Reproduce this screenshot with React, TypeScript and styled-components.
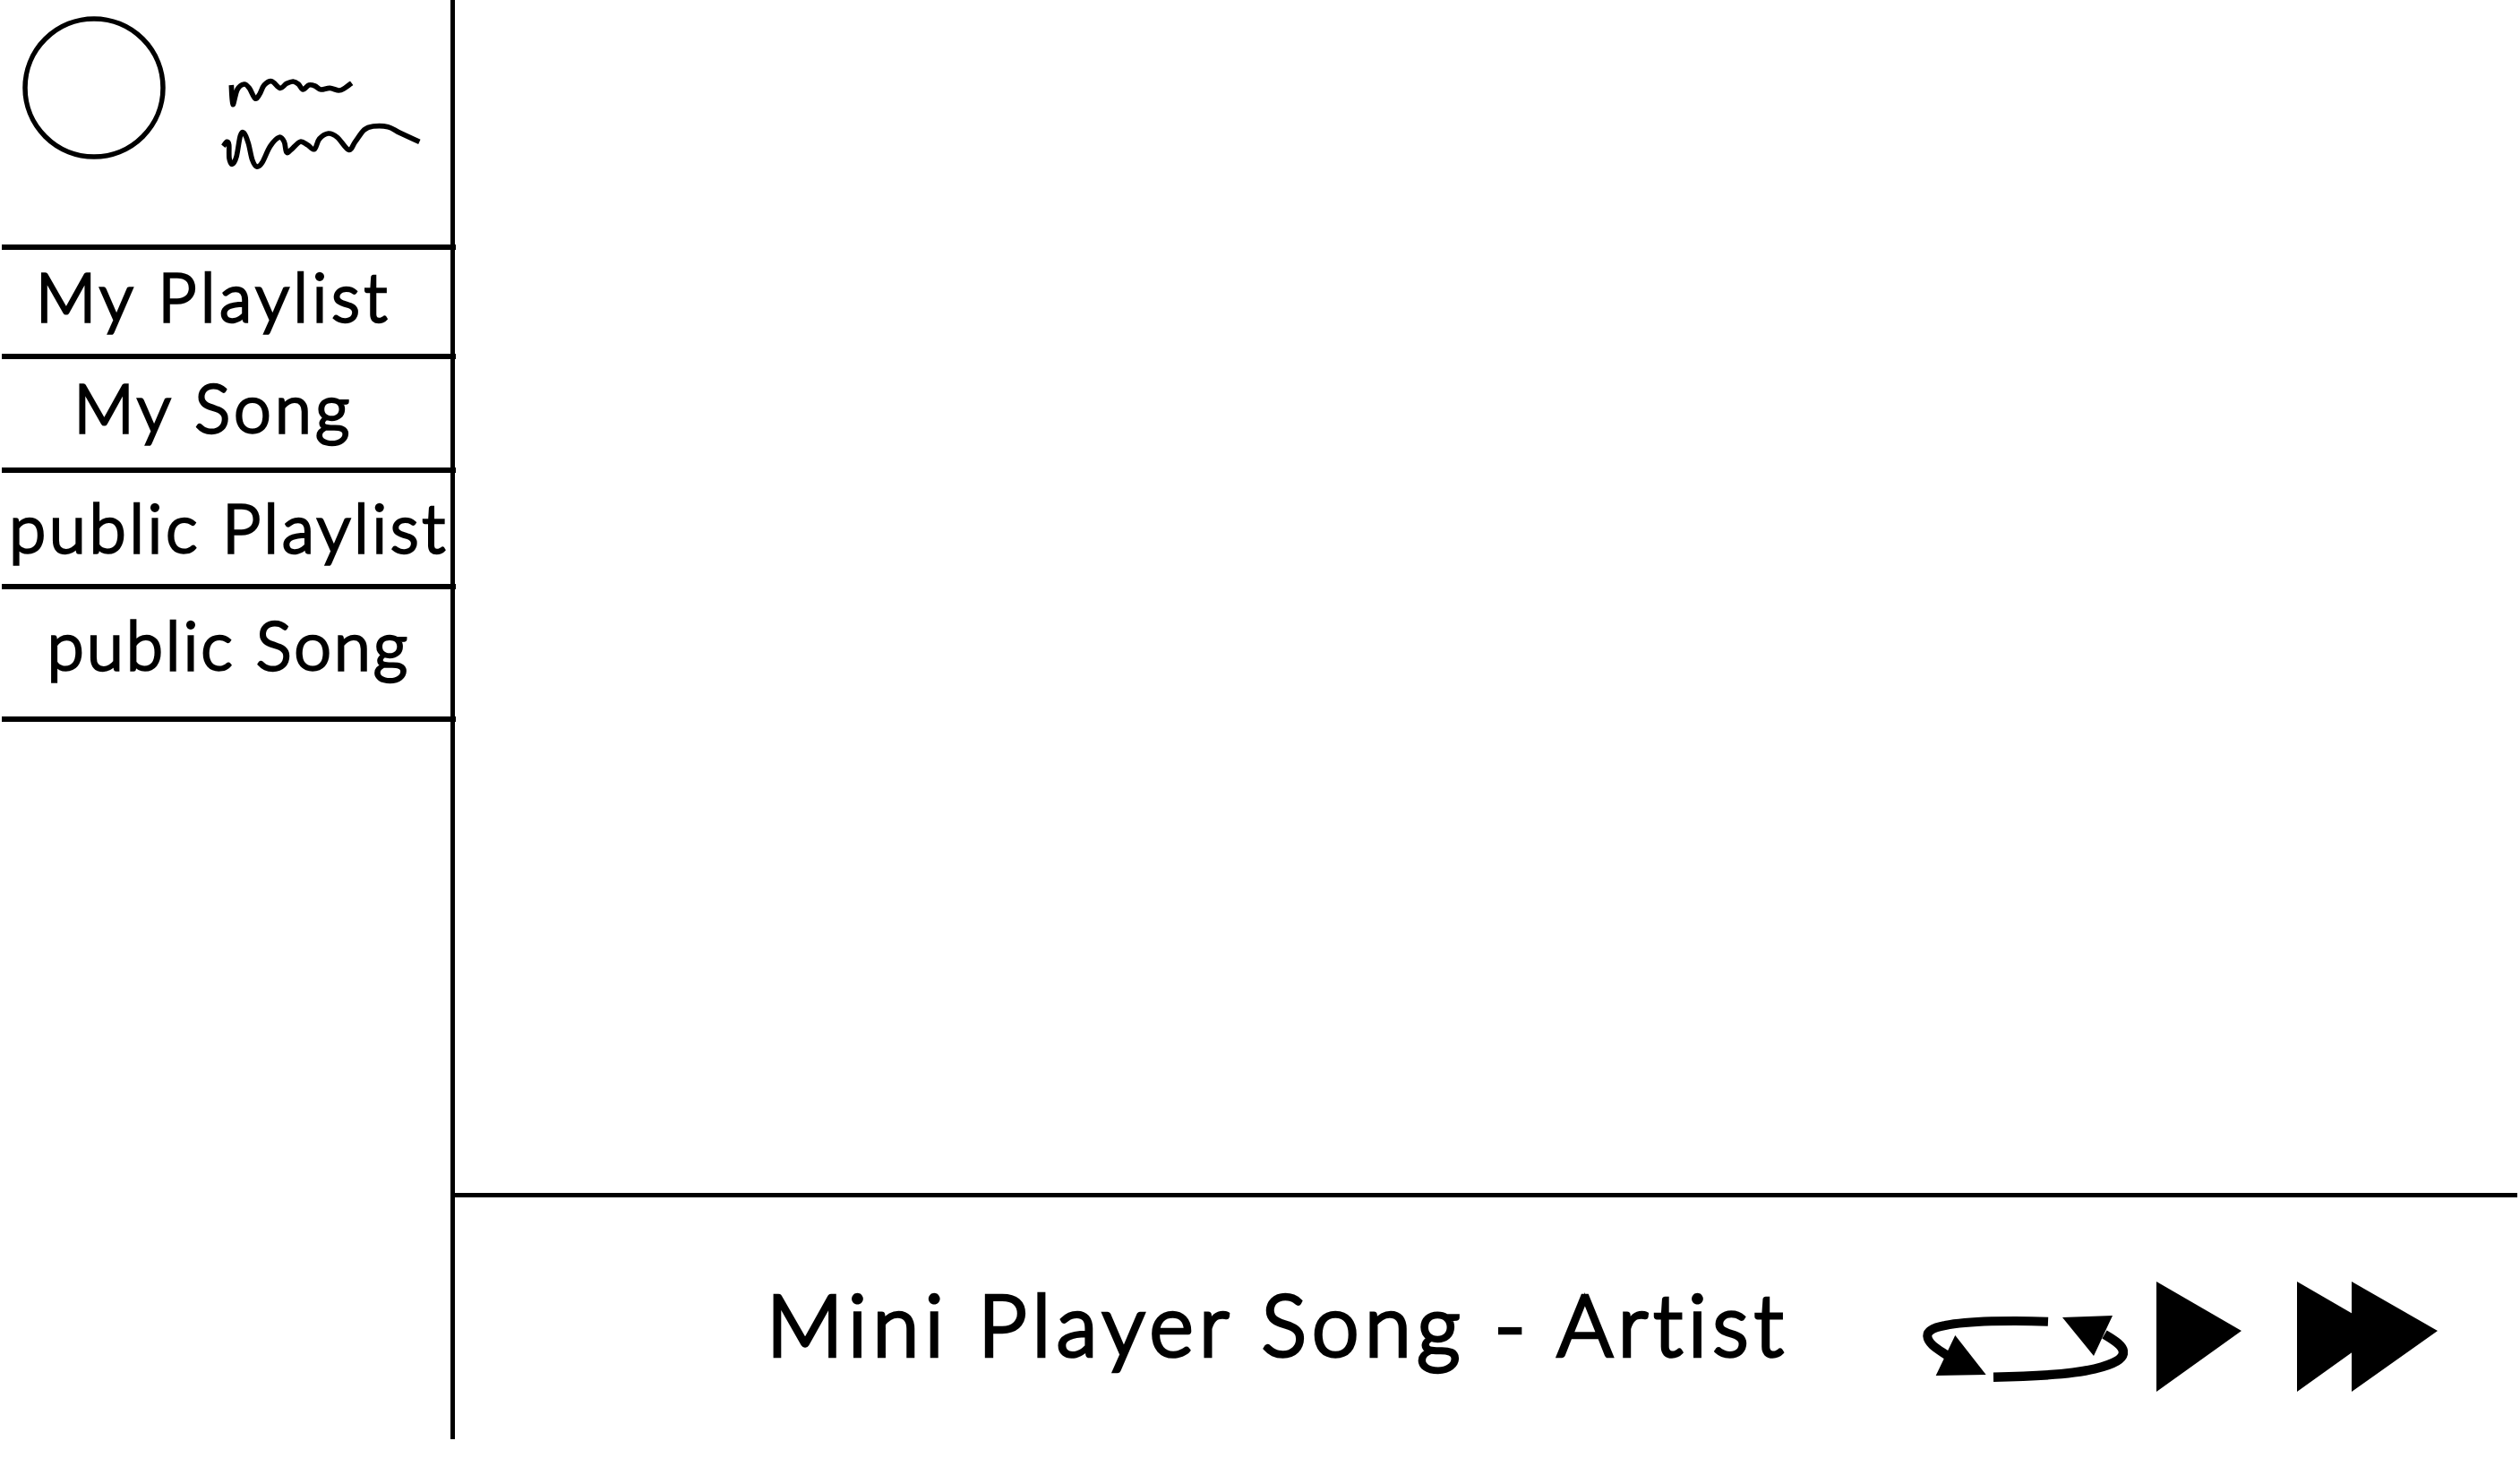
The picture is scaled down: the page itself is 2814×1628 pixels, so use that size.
import styled, { createGlobalStyle } from "styled-components";

const GlobalStyle = createGlobalStyle`
  html, body {
    margin: 0;
    padding: 0;
    background: #fff;
  }
`;

const navItems = [
  { label: "My Playlist", height: 122, shift: 34, lift: 13, tracking: 5 },
  { label: "My Song", height: 127, shift: 34, lift: 14, tracking: 4.5 },
  { label: "public Playlist", height: 130, shift: 0, lift: 4, tracking: 4 },
  { label: "public Song", height: 154, shift: 0, lift: 19, tracking: 3.3 },
];

// catmull-rom through the sampled points, the scribbles are hand drawn
const smooth = (pts: number[][]) => {
  let d = `M${pts[0][0]} ${pts[0][1]}`;
  for (let i = 0; i < pts.length - 1; i++) {
    const p0 = pts[i - 1] || pts[i];
    const p1 = pts[i];
    const p2 = pts[i + 1];
    const p3 = pts[i + 2] || p2;
    const c1x = p1[0] + (p2[0] - p0[0]) / 6;
    const c1y = p1[1] + (p2[1] - p0[1]) / 6;
    const c2x = p2[0] - (p3[0] - p1[0]) / 6;
    const c2y = p2[1] - (p3[1] - p1[1]) / 6;
    d += `C${c1x} ${c1y} ${c2x} ${c2y} ${p2[0]} ${p2[1]}`;
  }
  return d;
};

const nameScribble = smooth([
  [55, 45], [60, 110], [75, 60], [98, 42], [115, 55], [135, 90], [150, 75], [165, 45], [190, 32],
  [218, 55], [240, 40], [262, 33], [280, 42], [295, 60], [315, 45], [335, 48], [355, 60],
  [385, 55], [415, 63], [435, 55], [458, 38],
]);

const emailScribble = smooth([
  [28, 250], [40, 235], [47, 245], [48, 290], [58, 310], [72, 285], [85, 215], [97, 205],
  [112, 240], [125, 295], [140, 318], [158, 305], [185, 250], [215, 220], [232, 235], [240, 270],
  [255, 262], [285, 235], [310, 245], [333, 260], [350, 225], [380, 207], [410, 220], [448, 262],
  [470, 235], [500, 195], [530, 183], [580, 185], [620, 205], [685, 235],
]);

export default function App() {
  return (
    <Page>
      <GlobalStyle />
      <Sidebar>
        <Profile>
          <Avatar viewBox="0 0 160 160">
            <circle cx="80" cy="80" r="77" fill="none" stroke="#000" strokeWidth="5.5" />
          </Avatar>
          <Scribble viewBox="0 0 720 330">
            <path d={nameScribble} fill="none" stroke="#000" strokeWidth="17" strokeLinejoin="round" />
            <path d={emailScribble} fill="none" stroke="#000" strokeWidth="17" strokeLinejoin="round" />
          </Scribble>
        </Profile>
        {navItems.map((item) => (
          <NavRow
            key={item.label}
            $height={item.height}
            $shift={item.shift}
            $lift={item.lift}
            $tracking={item.tracking}
          >
            {item.label}
          </NavRow>
        ))}
      </Sidebar>
      <Main>
        <Content />
        <PlayerBar>
          <SongTitle>Mini Player Song - Artist</SongTitle>
          <Controls>
            <RepeatIcon viewBox="0 0 229 74">
              <path
                d="M140 6.700C100 5 50 6 25 11C8 14 5 19 5.300 23C6 32 18 38 28 45"
                fill="none"
                stroke="#000"
                strokeWidth="10"
              />
              <polygon points="36.300,22 70.700,66 14.700,67" />
              <path
                d="M79 68.700C120 68 165 66 192 59.500C215 54 224 48 224 41C224 34 215 28 203 21"
                fill="none"
                stroke="#000"
                strokeWidth="10.500"
              />
              <polygon points="156,2 212,0 191,45" />
            </RepeatIcon>
            <PlayIcon viewBox="0 0 95 123">
              <polygon points="0,0 95,55 0,123" />
            </PlayIcon>
            <ForwardIcon viewBox="0 0 157 123">
              <polygon points="0,0 95,55 0,123" />
              <polygon points="61,0 157,55 61,123" />
            </ForwardIcon>
          </Controls>
        </PlayerBar>
      </Main>
    </Page>
  );
}

const Page = styled.div`
  display: flex;
  box-sizing: border-box;
  width: 2811px;
  height: 1607px;
  padding-left: 2px;
  font-family: "Lato", "Noto Sans", sans-serif;
  color: #000;
`;

const Sidebar = styled.aside`
  display: flex;
  flex-direction: column;
  flex: 0 0 501px;
`;

const Profile = styled.div`
  display: flex;
  align-items: flex-start;
  height: 273px;
  padding: 18px 0 0 23px;
  box-sizing: border-box;
`;

const Avatar = styled.svg`
  width: 160px;
  height: 160px;
  flex: none;
`;

const Scribble = styled.svg`
  width: 240px;
  height: 110px;
  margin: 62px 0 0 55px;
  flex: none;
`;

const NavRow = styled.div<{ $height: number; $shift: number; $lift: number; $tracking: number }>`
  display: flex;
  align-items: center;
  justify-content: center;
  box-sizing: border-box;
  height: ${(p) => p.$height}px;
  margin-right: -6px;
  padding: 0 ${(p) => p.$shift}px ${(p) => p.$lift}px 0;
  border-top: 6px solid #000;
  font-size: 74px;
  font-weight: 300;
  letter-spacing: ${(p) => p.$tracking}px;
  white-space: nowrap;
  -webkit-text-stroke: 3.5px #000;

  &:last-child {
    border-bottom: 6px solid #000;
  }
`;

const Main = styled.main`
  display: flex;
  flex-direction: column;
  flex: 1;
  border-left: 5px solid #000;
`;

const Content = styled.div`
  flex: 1;
`;

const PlayerBar = styled.div`
  display: flex;
  align-items: flex-start;
  flex: 0 0 270px;
  padding: 0 89px 0 348px;
  border-top: 5px solid #000;
`;

const SongTitle = styled.div`
  margin-top: 84px;
  font-size: 94px;
  font-weight: 300;
  letter-spacing: 6.5px;
  white-space: nowrap;
  -webkit-text-stroke: 4.5px #000;
`;

const Controls = styled.div`
  display: flex;
  align-items: flex-start;
  margin-left: auto;
  padding-top: 94px;
`;

const RepeatIcon = styled.svg`
  width: 229px;
  height: 74px;
  margin: 38px 32px 0 0;
`;

const PlayIcon = styled.svg`
  width: 95px;
  height: 123px;
  margin-right: 62px;
`;

const ForwardIcon = styled.svg`
  width: 157px;
  height: 123px;
`;
